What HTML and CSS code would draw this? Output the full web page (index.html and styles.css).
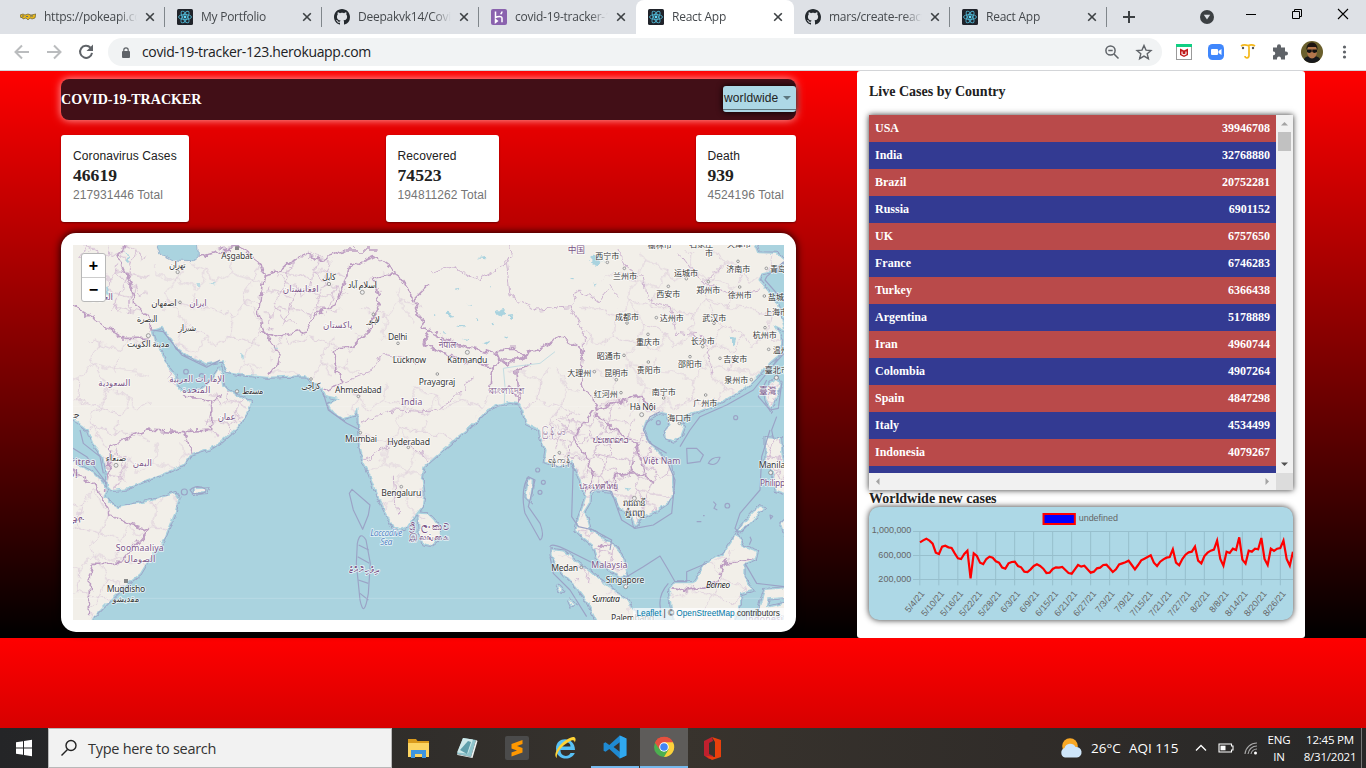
FILE: index.html
```html
<!DOCTYPE html>
<html lang="en">
<head>
<meta charset="utf-8">
<title>React App</title>
<link rel="stylesheet" href="styles.css">
</head>
<body>
<svg class="defs" width="0" height="0">
  <defs>
    <symbol id="react" viewBox="0 0 16 16"><rect width="16" height="16" rx="1.5" fill="#20232a"/><g fill="none" stroke="#4fb3cf" stroke-width=".9"><ellipse cx="8" cy="8" rx="6.5" ry="2.5"/><ellipse cx="8" cy="8" rx="6.5" ry="2.5" transform="rotate(60 8 8)"/><ellipse cx="8" cy="8" rx="6.5" ry="2.5" transform="rotate(120 8 8)"/></g><circle cx="8" cy="8" r="1.4" fill="#61dafb"/></symbol>
    <symbol id="github" viewBox="0 0 16 16"><path fill="#24292e" d="M8 0C3.58 0 0 3.58 0 8c0 3.54 2.29 6.53 5.47 7.59.4.07.55-.17.55-.38 0-.19-.01-.82-.01-1.49-2.01.37-2.53-.49-2.69-.94-.09-.23-.48-.94-.82-1.13-.28-.15-.68-.52-.01-.53.63-.01 1.08.58 1.23.82.72 1.21 1.87.87 2.33.66.07-.52.28-.87.51-1.07-1.78-.2-3.64-.89-3.64-3.95 0-.87.31-1.59.82-2.15-.08-.2-.36-1.02.08-2.12 0 0 .67-.21 2.2.82.64-.18 1.32-.27 2-.27s1.36.09 2 .27c1.53-1.04 2.2-.82 2.2-.82.44 1.1.16 1.92.08 2.12.51.56.82 1.27.82 2.15 0 3.07-1.87 3.75-3.65 3.95.29.25.54.73.54 1.48 0 1.07-.01 1.93-.01 2.2 0 .21.15.46.55.38A8.01 8.01 0 0 0 16 8c0-4.42-3.58-8-8-8z"/></symbol>
    <symbol id="x" viewBox="0 0 10 10"><path d="M1.2 1.2l7.6 7.6M8.800 1.200L1.200 8.800" stroke="#3c4043" stroke-width="1.6"/></symbol>
  </defs>
</svg>

<header class="tabs">
  <div class="tab"><svg class="fav" viewBox="0 0 16 16"><path d="M0 6l3-1 2 1 3-1 3 1 5-1-1 4-3 1-2-1-2 2-2-2-3 1-1-2-1 1z" fill="#e5b51d" stroke="#5b5326" stroke-width=".6"/><path d="M2 7h2M6 7.500h2M10 7h3" stroke="#3d5a8a" stroke-width=".8"/></svg><span class="tt">https://pokeapi.co/</span><svg class="cl"><use href="#x"/></svg></div>
  <div class="tab"><svg class="fav"><use href="#react"/></svg><span class="tt">My Portfolio</span><svg class="cl"><use href="#x"/></svg></div>
  <div class="tab"><svg class="fav"><use href="#github"/></svg><span class="tt">Deepakvk14/Covid</span><svg class="cl"><use href="#x"/></svg></div>
  <div class="tab nosep"><svg class="fav" viewBox="0 0 16 16"><rect width="16" height="16" rx="2" fill="#8a62ae"/><path d="M4.500 2.500v6c2-1 6.500-1.800 6.500.7v4M11 2.500c0 1.200-.6 2-1.400 2.700M4.500 10.500v3l1.800-1.500z" fill="none" stroke="#fff" stroke-width="1.500"/></svg><span class="tt">covid-19-tracker-1</span><svg class="cl"><use href="#x"/></svg></div>
  <div class="tab active"><svg class="fav"><use href="#react"/></svg><span class="tt">React App</span><svg class="cl"><use href="#x"/></svg></div>
  <div class="tab"><svg class="fav"><use href="#github"/></svg><span class="tt">mars/create-react-a</span><svg class="cl"><use href="#x"/></svg></div>
  <div class="tab"><svg class="fav"><use href="#react"/></svg><span class="tt">React App</span><svg class="cl"><use href="#x"/></svg></div>
  <svg class="plus" viewBox="0 0 12 12"><path d="M6 0v12M0 6h12" stroke="#3c4043" stroke-width="2"/></svg>
  <div class="win">
    <svg class="w42" viewBox="0 0 42 34"><circle cx="21" cy="17" r="7" fill="#3c4043"/><path d="M17.800 14.800h6.400L21 19.500z" fill="#dee1e6"/></svg>
    <svg class="w46" viewBox="0 0 46 34"><path d="M18 14.500h10" stroke="#000"/></svg>
    <svg class="w46" viewBox="0 0 46 34"><path d="M18.500 11.500h7v7h-7zM20.500 11v-1.500h7v7H26" fill="none" stroke="#000"/></svg>
    <svg class="w46" viewBox="0 0 46 34"><path d="M18 9l10 10M28 9L18 19" stroke="#000" stroke-width="1.100"/></svg>
  </div>
</header>
<nav class="toolbar">
  <svg class="tb" viewBox="0 0 32 36"><path d="M23 18H10M16 11.500L9.500 18l6.500 6.500" fill="none" stroke="#babcbe" stroke-width="2"/></svg>
  <svg class="tb" viewBox="0 0 32 36"><path d="M9 18h13M16 11.500l6.500 6.500-6.500 6.500" fill="none" stroke="#babcbe" stroke-width="2"/></svg>
  <svg class="tb" viewBox="0 0 32 36"><path d="M20.500 13.800A6 6 0 1 0 22 18.800" fill="none" stroke="#5f6368" stroke-width="2"/><path d="M23 10.500v6.500h-6.500z" fill="#5f6368"/></svg>
  <div class="pill">
    <svg class="lock" viewBox="0 0 8 11"><rect y="4" width="8" height="7" rx="1" fill="#5f6368"/><path d="M1.800 4.500V3a2.200 2.200 0 0 1 4.400 0v1.500" fill="none" stroke="#5f6368" stroke-width="1.200"/></svg>
    <span class="url">covid-19-tracker-123.herokuapp.com</span>
    <svg class="tb pz" viewBox="0 0 32 28"><circle cx="14.500" cy="12.500" r="4.600" fill="none" stroke="#5f6368" stroke-width="1.500"/><path d="M18 16l4.500 4.500M12.300 12.500h4.400" stroke="#5f6368" stroke-width="1.500"/></svg>
    <svg class="tb" viewBox="0 0 32 28"><path d="M16 7.500l2 4.600 5 .4-3.800 3.300 1.200 4.900-4.400-2.600-4.400 2.600 1.200-4.900L9 12.500l5-.4z" fill="none" stroke="#5f6368" stroke-width="1.400"/></svg>
  </div>
  <svg class="tb" viewBox="0 0 32 36"><rect x="8.500" y="10.500" width="15" height="15" fill="#fff" stroke="#9a9a9a"/><path d="M8 10h16v3H8z" fill="#10cf83"/><path d="M12 14.500l4 2 4-2v6.500l-4 2-4-2z" fill="#c01818"/><path d="M14 17.500v2.500l2 1 2-1v-2.500" fill="none" stroke="#fff" stroke-width="1.100"/></svg>
  <svg class="tb" viewBox="0 0 32 36"><rect x="8" y="10" width="16" height="16" rx="4.500" fill="#4087fc"/><rect x="11" y="15" width="7" height="6" rx="1" fill="#fff"/><path d="M18.500 17l3-2v6l-3-2z" fill="#fff"/></svg>
  <svg class="tb" viewBox="0 0 32 36"><path d="M9 12c2-1.500 4.500-1.500 7-.5 2.500-1 5-1 7 .5M17 12v9.500c0 3-4 3-4 .5" fill="none" stroke="#f4b81c" stroke-width="1.700"/><circle cx="11" cy="14" r="1.200" fill="#555"/><circle cx="21" cy="14" r="1.200" fill="#555"/></svg>
  <svg class="tb" viewBox="0 0 32 36"><path d="M9 13.500h4v-1.200a2 2 0 0 1 4 0v1.200h4v4h1a2 2 0 0 1 0 4h-1v4h-4v-1a2 2 0 0 0-4 0v1H9v-4.300h1a2 2 0 0 0 0-3.700H9z" fill="#5f6368"/></svg>
  <svg class="tb" viewBox="0 0 32 36"><circle cx="16" cy="18" r="11" fill="#6a5f2c"/><path d="M8 25.500c1-5 15-5 16 0a11 11 0 0 1-16 0" fill="#18191b"/><ellipse cx="16" cy="17.500" rx="5" ry="7" fill="#b3764c"/><path d="M10.500 16c-1-10 12-10 11 0l-1.500-3h-8z" fill="#1c1410"/><path d="M11 15.500h4.700v2.300c-1 1.500-4 1.500-4.700 0zM16.300 15.500H21v2.300c-1 1.500-4 1.500-4.700 0z" fill="#111"/></svg>
  <svg class="tb" viewBox="0 0 32 36"><g fill="#5f6368"><circle cx="16.500" cy="13" r="1.600"/><circle cx="16.500" cy="18" r="1.600"/><circle cx="16.500" cy="23" r="1.600"/></g></svg>
</nav>

<main class="app">
  <section class="left">
    <div class="head"><h1>COVID-19-TRACKER</h1><div class="select">worldwide<i></i></div></div>
    <div class="stats">
      <div class="stat"><p>Coronavirus Cases</p><h2>46619</h2><small>217931446 Total</small></div>
      <div class="stat"><p>Recovered</p><h2>74523</h2><small>194811262 Total</small></div>
      <div class="stat"><p>Death</p><h2>939</h2><small>4524196 Total</small></div>
    </div>
    <div class="mapcard"><div class="map">
      <svg class="mapsvg" viewBox="39 45 2133 1125">
        <defs>
          <filter id="rough" filterUnits="userSpaceOnUse" x="0" y="0" width="2220" height="1220"><feTurbulence type="fractalNoise" baseFrequency=".035" numOctaves="3" seed="4"/><feDisplacementMap in="SourceGraphic" scale="30" xChannelSelector="R" yChannelSelector="G"/></filter>
          <filter id="coast" filterUnits="userSpaceOnUse" x="0" y="0" width="2220" height="1220"><feTurbulence type="fractalNoise" baseFrequency=".05" numOctaves="2" seed="9"/><feDisplacementMap in="SourceGraphic" scale="14" xChannelSelector="R" yChannelSelector="G"/></filter>
          <pattern id="cells" width="120" height="110" patternUnits="userSpaceOnUse"><path d="M0 25L30 35 50 10 85 20 120 25M50 10L45 0M30 35L25 70 60 80 75 50 50 10M75 50L110 60 120 90M0 90L25 70M60 80L45 110M60 80L95 95 110 60M95 95L90 110M85 20L90 0M85 20L75 50" fill="none" stroke="#d0b8d1" stroke-width="2.800"/></pattern>
          <pattern id="big" width="230" height="190" patternUnits="userSpaceOnUse"><path d="M0 45L60 70 100 20 165 40 230 45M100 20L90 0M60 70L50 130 120 150 145 95 100 20M145 95L210 120 230 160M0 160L50 130M120 150L90 190M120 150L185 175 210 120M165 40L175 0" fill="none" stroke="#dac8d9" stroke-width="2.500"/></pattern>
          <path id="land" d="M20 20H2075L2095 70 2150 72 2172 90 2150 120 2105 130 2095 150 2120 180 2130 200 2150 220 2160 250 2172 300 2140 285 2155 310 2166 330 2160 370 2130 395 2100 430 2070 460 2040 480 2000 505 1960 525 1910 545 1865 560 1858 585 1832 585 1820 550 1800 545 1775 560 1755 575 1748 600 1760 630 1775 650 1800 675 1830 705 1835 740 1838 790 1825 815 1790 840 1750 860 1725 885 1715 850 1680 835 1670 810 1655 785 1610 780 1590 790 1588 815 1570 845 1580 865 1590 900 1620 920 1640 935 1665 950 1685 975 1695 1010 1700 1035 1680 1040 1650 1020 1610 980 1600 945 1570 920 1550 900 1555 870 1570 830 1580 800 1565 760 1550 720 1535 690 1520 705 1495 705 1455 695 1460 660 1445 630 1440 600 1400 580 1390 540 1380 520 1350 515 1310 525 1280 540 1260 560 1230 590 1190 620 1170 640 1110 692 1090 710 1085 750 1090 790 1085 830 1060 860 1040 890 1020 898 1000 888 980 850 950 790 930 730 910 690 900 640 897 580 895 530 880 555 850 565 825 548 805 525 840 505 795 495 785 470 750 450 735 435 620 440 540 432 500 425 491 390 440 400 390 380 350 350 310 290 275 300 285 340 310 380 320 410 345 440 350 470 370 490 420 480 460 450 480 420 490 470 530 500 570 515 560 545 540 580 520 600 480 635 450 655 390 675 370 705 300 735 260 750 200 775 155 780 145 770 140 730 130 680 100 640 85 600 60 580 20 550zM20 680L60 710 100 730 130 760 140 780 130 800 150 820 175 835 220 825 290 810 345 790 355 805 345 845 330 880 310 930 270 980 240 1030 190 1070 140 1120 100 1160 85 1190H20zM1075 848L1100 850 1120 870 1140 895 1138 925 1115 945 1090 940 1080 910zM1475 960L1510 965 1550 995 1590 1025 1620 1050 1670 1090 1700 1110 1722 1145 1715 1190H1620L1580 1110 1550 1070 1520 1040 1495 1010 1475 975zM1830 1080L1845 1060 1900 1060 1940 1000 1990 975 2030 915 2050 950 2090 965 2085 985 2050 1000 2050 1040 2075 1080 2040 1090 2040 1120 2010 1190H1850L1835 1130zM1815 605L1832 584 1858 580 1872 592 1862 618 1840 634 1818 625zM2150 445L2115 480 2120 510 2132 535 2150 495 2158 460zM2120 625L2160 628 2165 680 2180 720V790L2150 780 2140 730 2120 690zM2100 830L2110 834 2045 900 2035 900zM2100 1190L2100 1130 2115 1080 2180 1075V1100L2125 1105 2120 1135 2180 1120V1150L2140 1160zM405 778L440 776 436 786 405 788zM1405 750L1415 752 1410 810 1400 800zM1490 1065L1505 1080 1497 1082zM1525 1105L1543 1125 1535 1128zM2165 880L2180 865V925z"/>
          <clipPath id="lc"><use href="#land"/></clipPath>
        </defs>
        <rect x="39" y="45" width="2133" height="1125" fill="#aad3df"/>
        <g filter="url(#coast)">
          <use href="#land" fill="none" stroke="#9ba3c6" stroke-width="13"/>
          <use href="#land" fill="#f2efe9" stroke="#aad3df" stroke-width="8"/>
          <use href="#land" fill="#f2efe9"/>
          <path d="M285 30L300 70 340 90 400 92 415 80 412 30z" fill="#aad3df" stroke="#9bb5cf" stroke-width="3"/>
        </g>
        <g clip-path="url(#lc)"><g filter="url(#rough)">
          <path d="M1450 590L1560 530 1660 510 1740 580 1860 720 1840 820 1720 900 1560 790z" fill="url(#cells)"/>
          <path d="M1560 850H1720V1060H1540z" fill="url(#cells)"/>
          <path d="M610 190L720 60 870 110 850 240 620 300z" fill="url(#cells)"/>
          <path d="M30 30H260L265 270 130 230zM80 650H200V780H120zM440 480H570V620H440zM330 400H360V480H330zM2110 400H2180V820H2110z" fill="url(#cells)"/>
          <path d="M40 330H270V650H40zM280 100H600V430H340zM150 640H420V740H150z" fill="url(#big)"/>
          <path d="M30 780H370V1180H30zM620 320H900V440H640zM850 440L1290 500 1200 620 1100 700V900H900zM930 80L1110 250 1000 320 880 330z" fill="url(#big)"/>
          <path d="M1560 200L1750 60H2180V560H1650L1580 380zM1340 410L1540 420 1600 760 1450 700zM1830 960H2120V1180H1830zM1470 950H1740V1180z" fill="url(#big)"/>
          <g fill="none" stroke="#bd9dc2" stroke-width="5" stroke-linejoin="round">
            <path d="M200 30L175 80 215 170 225 220 265 260 275 300M30 225L100 265 190 325 270 325M415 80L480 60 540 50 600 100 610 135 595 250 610 300 660 370 655 400 620 440"/>
            <path d="M610 135L660 125 720 75 790 90 860 60 950 60M600 305L650 320 740 300 770 250 820 230 850 170 870 110 940 80 1010 130 1060 210 1110 160M1010 130L940 140 960 220 920 310 880 350 820 360 830 430 850 460 790 480"/>
            <path d="M1060 215L1090 290 1180 340 1300 370 1340 405 1430 360 1500 320 1550 350 1570 370 1560 470 1600 500 1610 540 1660 520 1740 500 1790 545M1110 290L1090 340 1200 390 1310 410 1320 390M1300 410L1290 490 1350 470 1380 520 1370 420 1420 400"/>
            <path d="M1310 370L1320 355 1370 355 1395 380 1380 390 1320 390zM1600 540L1540 620 1600 730 1580 790 1560 850M1610 550L1660 600 1730 640 1760 750 1780 760M1670 780L1665 740 1760 730M1720 690L1710 740M1610 945L1640 950 1660 935M1840 1070L1880 1080 1970 1060 1990 1000 2080 990M2000 980L1985 1000"/>
            <path d="M370 490L380 505 455 510 455 600 370 605 260 600 150 650 140 780M370 605L395 675M460 510L490 500M130 800L150 860 265 900 180 1000 100 1000 88 1040V1150M39 720L100 760 130 800"/>
          </g>
          <g fill="none" stroke="#ccb2cf" stroke-width="3">
            <path d="M1110 130L1180 110 1250 150 1340 100 1350 200 1440 240 1530 230 1550 180 1620 210 1650 170 1680 200M1340 100L1360 30M1530 230L1570 300 1570 370M1680 60L1700 120 1750 140 1760 210 1830 230 1850 310 1930 320 1960 430M1860 70L1930 160 1980 110M1930 160L2010 190 2100 180"/>
            <path d="M850 460L940 420 970 370 1080 400M900 580L1000 540 1110 545 1180 510 1240 440M910 690L1000 640 1060 650 1110 690M1000 740L1010 860"/>
          </g>
        </g>
        <g fill="#aad3df" filter="url(#rough)"><path d="M190 55l15 25 8 22-9-8zM140 165l8 15 8 35-8-5zM1595 78l22-3 12 14-15 14-21-6zM1250 85l24-5-5 8zM1305 240l20-6 9 14-17 11zM1160 250l12-2 4 10-12 3zM1200 285l9 0-2 7-10 0zM1240 265l15 2-2 6zM1345 255l18-3-5 12zM1525 145l18 0-4 7zM1330 320l18 0-5 7zM1270 335l20-9-4 13zM1600 160l10 8-5 4zM540 370h8v12h-6zM400 160h18l-2 4h-14zM440 160h20v3h-18zM640 350h20v3h-18zM2010 320l16 3-4 22-12-8zM1695 765l15 12-4 6zM1120 250h15l-4 8zM1190 180l14-4-3 8zM1150 310h12l-4 6zM1210 325l16 2-6 5zM1290 165l10 5-6 4zM1225 225l12-4 2 7zM1295 280l14 2-6 7z"/></g></g>
        <g fill="none" stroke="#9ba3c6" stroke-width="3.500" stroke-linejoin="round">
          <path d="M275 300L310 305 365 375 440 412 480 390M790 490L805 540 860 580 900 600M876 778L930 825 925 855 908 898 880 840 868 790zM892 940Q900 900 918 930L931 1000 925 1090Q912 1170 900 1110L889 1000zM1405 740Q1380 780 1395 850L1440 930Q1455 920 1440 880L1405 830 1425 750zM1470 950Q1475 935 1540 970L1600 1000M1470 980L1480 1030 1530 1080 1580 1160M1590 790Q1595 770 1655 785L1670 830 1685 870 1725 895 1780 885 1835 850 1845 750 1820 690M1540 700L1535 860 1555 890 1600 900 1655 930 1650 960M1700 1040L1750 1010 1800 978 1825 1020 1845 1055 1880 1055 1880 1025 1940 1000M2035 905L2025 895 2040 850 2100 780 2105 680 2130 600M2055 1000L2090 1060 2172 1070M1800 545L1770 560 1750 600 1770 640 1820 670M1860 650L1890 600 1920 560 2000 525 2080 480 2140 405 2172 370M2120 450L2095 500 2130 540 2155 535 2165 460M2172 95L2120 140 2115 150 2172 215M2150 560L2135 600 2140 625M1880 655L1910 655 1930 675 1920 695 1882 700zM1945 700q10-20 35-18-10 30-35 18zM1825 1060Q1780 1110 1815 1170"/>
          <circle cx="2027" cy="563" r="6"/><circle cx="1795" cy="578" r="6"/><circle cx="1450" cy="757" r="6"/><circle cx="1433" cy="720" r="6"/><circle cx="1440" cy="787" r="6"/><circle cx="2002" cy="827" r="7"/><circle cx="373" cy="786" r="9"/><path d="M390 780q20-20 48-2 0 18-40 12zM1960 815l8 8-6 12 10 5M1910 875h14M1929 857h5M896 945l30 15M893 980l35 20M895 1050l30 10M900 1090l25 20"/>
          <circle cx="378" cy="425" r="7"/><circle cx="425" cy="438" r="7"/><path d="M60 600L70 640 120 680 130 730M39 655L80 680 110 720 140 760M2070 920l4 10-6 14M2130 855l8 4-6 8z"/>
        </g>
        <path d="M1333 520L1335 470 1330 415 1375 408 1440 400 1485 365" fill="none" stroke="#c3dde2" stroke-width="3"/>
        <path d="M39 529H2172M39 1105H2172" stroke="#fff" opacity=".25" stroke-width="2"/>
        <g fill="#eee" stroke="#777" stroke-width="2"><circle cx="353" cy="126" r="5"/><circle cx="360" cy="217" r="4"/><circle cx="265" cy="317" r="6"/><circle cx="531" cy="484" r="5"/><circle cx="807" cy="162" r="5"/><circle cx="907" cy="187" r="6"/><circle cx="940" cy="253" r="4"/><circle cx="1014" cy="340" r="4"/><circle cx="895" cy="499" r="4"/><circle cx="901" cy="608" r="4"/><circle cx="1045" cy="652" r="4"/><circle cx="1024" cy="770" r="4"/><circle cx="168" cy="706" r="6"/><circle cx="1222" cy="367" r="6"/><circle cx="1132" cy="432" r="4"/><circle cx="753" cy="447" r="4"/><circle cx="1745" cy="554" r="6"/><circle cx="1723" cy="805" r="6"/><circle cx="1697" cy="1070" r="6"/><circle cx="1564" cy="1012" r="4"/><circle cx="2132" cy="728" r="6"/><circle cx="2149" cy="443" r="6"/><circle cx="1498" cy="668" r="4"/><circle cx="1642" cy="97" r="4"/><circle cx="1693" cy="115" r="4"/><circle cx="1879" cy="146" r="4"/><circle cx="1825" cy="169" r="4"/><circle cx="1945" cy="155" r="4"/><circle cx="2034" cy="94" r="4"/><circle cx="2039" cy="171" r="4"/><circle cx="2119" cy="115" r="4"/><circle cx="2113" cy="198" r="4"/><circle cx="1789" cy="263" r="4"/><circle cx="1701" cy="279" r="4"/><circle cx="1962" cy="280" r="4"/><circle cx="1764" cy="313" r="4"/><circle cx="1928" cy="350" r="4"/><circle cx="2115" cy="293" r="4"/><circle cx="1692" cy="376" r="4"/><circle cx="1765" cy="396" r="4"/><circle cx="1890" cy="380" r="4"/><circle cx="1980" cy="385" r="4"/><circle cx="1603" cy="425" r="4"/><circle cx="1669" cy="449" r="4"/><circle cx="1683" cy="488" r="4"/><circle cx="1811" cy="504" r="4"/><circle cx="1937" cy="495" r="4"/><circle cx="2074" cy="449" r="4"/><circle cx="1858" cy="580" r="4"/><circle cx="2126" cy="358" r="4"/></g>
        <path d="M525 49h12v11h-12zM192 1047h12v12h-12z" fill="#888"/>
        <g class="city">
          <text x="531" y="86" textLength="94">Aşgabat</text><text x="352" y="113" textLength="50">تهران</text><text x="312" y="228" textLength="76">اصفهان</text><text x="261" y="276" textLength="62">البصرة</text><text x="382" y="302" textLength="54">شیراز</text><text x="265" y="350" textLength="128">مدينة الكويت</text><text x="578" y="492" textLength="64">مسقط</text><text x="807" y="149" textLength="42">کابل</text><text x="907" y="173" textLength="88">اسلام آباد</text><text x="940" y="278" textLength="40">لاہور</text><text x="1013" y="330" textLength="58">Delhi</text><text x="1048" y="400" textLength="100">Lucknow</text><text x="1131" y="464" textLength="110">Prayagraj</text><text x="895" y="490" textLength="140">Ahmedabad</text><text x="753" y="476" textLength="58">کراچی</text><text x="903" y="635" textLength="96">Mumbai</text><text x="1046" y="644" textLength="128">Hyderabad</text><text x="1024" y="797" textLength="120">Bengaluru</text><text x="168" y="693" textLength="62">صنعاء</text><text x="48" y="565" textLength="22">جد</text><text x="198" y="1085" textLength="116">Muqdisho</text><text x="198" y="1116" textLength="80">مقديشو</text><text x="1222" y="398" textLength="120">Katmandu</text><text x="1748" y="541" textLength="78">Hà Nội</text><text x="1498" y="700" textLength="70">ရန်ကုန်</text><text x="1722" y="828" textLength="68">រាជធានី</text><text x="1722" y="858" textLength="60">ភ្នំពេញ</text><text x="1514" y="1022" textLength="80">Medan</text><text x="1695" y="1058" textLength="116">Singapore</text><text x="1718" y="1172" textLength="130">Palembang</text><text x="2136" y="713" textLength="80">Manila</text>
          <text x="1799" y="53">榆林市</text><text x="1924" y="50">石家庄</text><text x="1947" y="78">市</text><text x="2037" y="50">天津市</text><text x="1642" y="86">西宁市</text><text x="1695" y="146">兰州市</text><text x="1878" y="137">运城市</text><text x="2035" y="127">济南市</text><text x="2166" y="125">青岛市</text><text x="1825" y="200">西安市</text><text x="1945" y="188">郑州市</text><text x="2039" y="204">徐州市</text><text x="2160" y="210">盐城市</text><text x="1701" y="271">成都市</text><text x="1835" y="274">达州市</text><text x="1963" y="272">武汉市</text><text x="2148" y="254">上海市</text><text x="1764" y="344">重庆市</text><text x="1928" y="342">长沙市</text><text x="2114" y="324">杭州市</text><text x="2174" y="370">温州市</text><text x="1646" y="388">昭通市</text><text x="1766" y="428">贵阳市</text><text x="1890" y="411">邵阳市</text><text x="2026" y="395">吉安市</text><text x="1558" y="437">大理州</text><text x="1669" y="437">昆明市</text><text x="2029" y="458">泉州市</text><text x="2150" y="428">臺北市</text><text x="1637" y="500">红河州</text><text x="1811" y="495">南宁市</text><text x="1936" y="528">广州市</text><text x="1858" y="572">海口市</text>
        </g>
        <g class="land-name">
          <text x="126" y="209" textLength="66">العراق</text><text x="414" y="228" textLength="52">ایران</text><text x="722" y="187" textLength="108">افغانستان</text><text x="833" y="295" textLength="88">پاکستان</text><text x="163" y="468" textLength="96">السعودية</text><text x="411" y="457" textLength="166">الإمارات العربية</text><text x="409" y="488" textLength="84">المتحدة</text><text x="500" y="570" textLength="54">عمان</text><text x="1055" y="524" textLength="64">India</text><text x="247" y="708" textLength="58">اليمن</text><text x="62" y="704" textLength="88">Eritrea</text><text x="42" y="738" textLength="22">إر</text><text x="48" y="878" textLength="50">ኢትዮ</text><text x="239" y="964" textLength="144">Soomaaliya</text><text x="239" y="996" textLength="94">الصومال</text><text x="1162" y="353" textLength="52">नेपाल</text><text x="1339" y="491" textLength="104">বাংলাদেশ</text><text x="1549" y="68">中国</text><text x="1480" y="614" textLength="68">မြန်မာ</text><text x="1652" y="638" textLength="108">ປະເທດລາວ</text><text x="1805" y="702" textLength="112">Việt Nam</text><text x="1616" y="776" textLength="118">ประเทศไทย</text><text x="1108" y="900" textLength="120">ශ්‍රී ලංකාව</text><text x="1108" y="930" textLength="120">இலங்கை</text><text x="911" y="1030" textLength="90">ދިވެހިރާއްޖެ</text><text x="1648" y="1013" textLength="108">Malaysia</text><text x="2123" y="491">臺灣</text><text x="2160" y="768" textLength="120">Philippines</text><text x="2120" y="1175" textLength="130">Indonesia</text>
        </g>
        <g class="isle"><text x="1638" y="1117" textLength="84">Sumatra</text><text x="1974" y="1075" textLength="72">Borneo</text></g>
        <g class="sea"><text x="979" y="918" textLength="96">Laccadive</text><text x="979" y="944" textLength="36">Sea</text></g>
      </svg>
      <div class="zoom"><span>+</span><span>−</span></div>
      <div class="attr"><b>Leaflet</b> | © <b>OpenStreetMap</b> contributors</div>
    </div></div>
  </section>

  <aside class="right">
    <h3>Live Cases by Country</h3>
    <div class="scroller">
      <div class="rows">
        <div class="row"><span>USA</span><span>39946708</span></div><div class="row"><span>India</span><span>32768880</span></div><div class="row"><span>Brazil</span><span>20752281</span></div><div class="row"><span>Russia</span><span>6901152</span></div><div class="row"><span>UK</span><span>6757650</span></div><div class="row"><span>France</span><span>6746283</span></div><div class="row"><span>Turkey</span><span>6366438</span></div><div class="row"><span>Argentina</span><span>5178889</span></div><div class="row"><span>Iran</span><span>4960744</span></div><div class="row"><span>Colombia</span><span>4907264</span></div><div class="row"><span>Spain</span><span>4847298</span></div><div class="row"><span>Italy</span><span>4534499</span></div><div class="row"><span>Indonesia</span><span>4079267</span></div><div class="row"></div>
      </div>
      <div class="vbar"><svg viewBox="0 0 17 17"><path d="M5 10.500h7L8.500 7z" fill="#a3a3a3"/></svg><div class="thumb"></div><svg class="dn" viewBox="0 0 17 17"><path d="M5 6.500h7L8.500 10z" fill="#505050"/></svg></div>
      <div class="hbar"><svg viewBox="0 0 17 17"><path d="M10.500 5v7L7 8.500z" fill="#a3a3a3"/></svg><svg viewBox="0 0 17 17"><path d="M6.500 5v7L10 8.500z" fill="#a3a3a3"/></svg></div>
      <div class="corner"></div>
    </div>
    <h3 class="h3b">Worldwide new cases</h3>
    <svg class="chart" viewBox="27 81 1272 339">
      <path d="M159 154.500H1299M159 226.500H1299M159 298.500H1299M179.500 154V316M236.500 154V316M293.500 154V316M350.500 154V316M407 154V316M464 154V316M521 154V316M578 154V316M635 154V316M692 154V316M749 154V316M806 154V316M862 154V316M919 154V316M976 154V316M1033 154V316M1090 154V316M1147 154V316M1204 154V316M1261 154V316" stroke="#97bfcd" stroke-width="3" fill="none"/>
      <rect x="550.500" y="102" width="94" height="30" fill="#00f" stroke="red" stroke-width="6"/>
      <g class="ct"><text x="656" y="123" textLength="118">undefined</text><g text-anchor="end"><text x="154" y="160" textLength="119">1,000,000</text><text x="154" y="233" textLength="99">600,000</text><text x="154" y="305" textLength="99">200,000</text>
      <text transform="translate(195 342) rotate(-50)">5/4/21</text><text transform="translate(254 342) rotate(-50)">5/10/21</text><text transform="translate(311 342) rotate(-50)">5/16/21</text><text transform="translate(368 342) rotate(-50)">5/22/21</text><text transform="translate(425 342) rotate(-50)">5/28/21</text><text transform="translate(482 342) rotate(-50)">6/3/21</text><text transform="translate(539 342) rotate(-50)">6/9/21</text><text transform="translate(596 342) rotate(-50)">6/15/21</text><text transform="translate(653 342) rotate(-50)">6/21/21</text><text transform="translate(710 342) rotate(-50)">6/27/21</text><text transform="translate(766 342) rotate(-50)">7/3/21</text><text transform="translate(823 342) rotate(-50)">7/9/21</text><text transform="translate(880 342) rotate(-50)">7/15/21</text><text transform="translate(937 342) rotate(-50)">7/21/21</text><text transform="translate(994 342) rotate(-50)">7/27/21</text><text transform="translate(1051 342) rotate(-50)">8/2/21</text><text transform="translate(1108 342) rotate(-50)">8/8/21</text><text transform="translate(1165 342) rotate(-50)">8/14/21</text><text transform="translate(1222 342) rotate(-50)">8/20/21</text><text transform="translate(1279 342) rotate(-50)">8/26/21</text></g></g>
      <polyline class="line" transform="translate(180 0) scale(9.482 1)" points="0,187 1,181 2,176 3,182 4,191 5,218 6,222 7,200 8,197 9,202 10,204 11,220 12,235 13,237 14,222 15,212 16,295 17,220 18,228 19,248 20,252 21,237 22,230 23,233 24,244 25,248 26,263 27,266 28,250 29,246 30,245 31,258 32,262 33,275 34,276 35,268 36,258 37,253 38,258 39,266 40,279 41,278 42,267 43,262 44,263 45,261 46,270 47,279 48,281 49,268 50,255 51,260 52,257 53,268 54,278 55,275 56,265 57,263 58,255 59,254 60,265 61,276 62,268 63,253 64,250 65,247 66,242 67,255 68,268 69,255 70,241 71,236 72,231 73,226 74,248 75,258 76,245 77,238 78,233 79,231 80,208 81,248 82,256 83,237 84,224 85,217 86,215 87,200 88,242 89,250 90,228 91,218 92,212 93,209 94,182 95,237 96,257 97,215 98,219 99,206 100,210 101,172 102,239 103,251 104,212 105,215 106,206 107,208 108,174 109,237 110,255 111,206 112,213 113,206 114,204 115,182 116,237 117,257 118,215"/>
    </svg>
  </aside>
</main>

<footer class="taskbar">
  <svg class="start" viewBox="0 0 48 40"><path d="M16 14.200l7-1v6.300h-7zM24 13l8-1.200v7.700h-8zM16 20.500h7v6.300l-7-1zM24 20.500h8v7.700L24 27z" fill="#fff"/></svg>
  <div class="search"><svg viewBox="0 0 18 18"><circle cx="11" cy="6.500" r="5" fill="none" stroke="#222" stroke-width="1.400"/><path d="M7.500 10.500L1.500 16.500" stroke="#222" stroke-width="1.400"/></svg>Type here to search</div>
  <div class="apps">
    <svg viewBox="0 0 48 40"><path d="M13 11h8l1.500 2H34v4H13z" fill="#d99a1c"/><path d="M13 15h21v14H13z" fill="#fcd462"/><path d="M16 22h15v8h-4v-4h-7v4h-4z" fill="#3d95e0"/></svg>
    <svg viewBox="0 0 48 40"><path d="M19 10l13 2-5 17-14-3z" fill="#8fc4cc"/><path d="M19 10l10 1.500-5 14-11-1z" fill="#cfe9ea"/><path d="M13 26l14 3 5-17 1.500 1-5 17-15-3z" fill="#eef3f3"/><path d="M16 22l8-9 3 1-4 12z" fill="#5f9fab"/></svg>
    <svg viewBox="0 0 48 40"><rect x="12" y="8" width="24" height="24" rx="2" fill="#4b4b4b"/><path d="M18.500 16l11-4v4l-5.500 2 5.500 2v4.500l-11 4v-4l5.500-2-5.500-2z" fill="#ff9800"/></svg>
    <svg viewBox="0 0 48 40"><path d="M33 22H18.500c0 7 8 7.500 10 3h4.300C30 33 14 33 14 20.500S33 8 33 22zM18.800 18.500h9.700c0-6-9.200-6-9.700 0z" fill="#58c1f5"/><path d="M15 30c-5-3 3-15 10-18.500 4.500-3 8-3.500 8.500-.5.300 1-.2 2.500-1 3.500.3-2.500-2-3-6-.5-7 4-13 11.500-11.500 16z" fill="#ffd335"/></svg>
    <svg class="open" viewBox="0 0 48 40"><path d="M29 8l7 3v18l-7 3-11-10-4 3-2-1v-8l2-1 4 3zM29 15l-6.500 5 6.500 5z" fill="#1f8ad2"/><path d="M29 8l7 3v18l-7 3z" fill="#30a9f0"/></svg>
    <svg class="open on" viewBox="0 0 48 40"><circle cx="24" cy="20" r="10.500" fill="#4caf50"/><path d="M24 20L14.500 15.500A10.500 10.500 0 0 1 33.500 15z" fill="#ea4335"/><path d="M24 9.500a10.500 10.500 0 0 0-9.500 6l5 7L24 15h9.500a10.500 10.500 0 0 0-9.500-5.500z" fill="#e4513f"/><path d="M24 15h9.500a10.500 10.500 0 0 1-9.500 15.500l4.800-8z" fill="#fdd03b"/><circle cx="24" cy="20" r="5" fill="#fff"/><circle cx="24" cy="20" r="4" fill="#4285f4"/></svg>
    <svg viewBox="0 0 48 40"><path d="M15 13l8-4 1 4-4 2v11l4 2v3h-4l-5-3.500z" fill="#c0202e"/><path d="M23 9l9 3v17l-9 3-6-4 9 1V14z" fill="#e8400c"/></svg>
  </div>
  <div class="tray">
    <svg class="wx" viewBox="0 0 24 24"><circle cx="11" cy="10" r="7.800" fill="#f9a825"/><path d="M6 21.500a5 5 0 0 1-.5-9.500 6 6 0 0 1 11-1A5.300 5.300 0 0 1 18 21.500z" fill="#cfe6fa"/></svg>
    <span class="temp">26°C</span><span class="aqi">AQI 115</span>
    <svg class="ch" viewBox="0 0 12 8"><path d="M1 6.500l5-5 5 5" fill="none" stroke="#fff" stroke-width="1.300"/></svg>
    <svg class="bat" viewBox="0 0 16 10"><path d="M1 1h12.500v2h1.500v4h-1.500v2H1z" fill="none" stroke="#fff" stroke-width="1.100"/><path d="M2.500 2.700h5v4.600h-5z" fill="#fff"/></svg>
    <svg class="wifi" viewBox="0 0 14 14"><path d="M1 13A12 12 0 0 1 13 2M4 13a9 9 0 0 1 9-8M7 13a6 6 0 0 1 6-5" fill="none" stroke="#aaa" stroke-width="1.100"/><circle cx="11.500" cy="12" r="1.500" fill="#fff"/></svg>
    <div class="two lang"><span>ENG</span><span>IN</span></div><div class="two time"><span>12:45 PM</span><span>8/31/2021</span></div><i class="peek"></i>
  </div>
</footer>
</body>
</html>
```
FILE: styles.css
```css
*{box-sizing:border-box}
body{margin:0;width:1366px;height:768px;overflow:hidden;display:flex;flex-direction:column;font-family:"Liberation Sans",Arial,sans-serif}
h1,h2,h3,p{margin:0}
.defs{position:absolute}
svg{flex:none;display:block}
.tabs{height:34px;flex:none;background:#dee1e6;display:flex;align-items:center;padding-left:8px;font:12px/16px "Open Sans","Noto Sans",sans-serif;color:#45494d}
.tab{width:157px;height:34px;flex:none;display:flex;align-items:center;padding-left:12px;background:linear-gradient(#80868b,#80868b) right center/1px 20px no-repeat}
.tab.nosep{background:none}
.tab.active{background:#fff;border-radius:8px 8px 0 0;width:158px;margin-right:-1px}
.fav{width:16px;height:16px}
.tt{width:93px;margin-left:8px;overflow:hidden;white-space:nowrap;letter-spacing:-.25px;-webkit-mask:linear-gradient(90deg,#000 80%,transparent)}
.cl{width:10px;height:10px;margin-left:8px}
.plus{width:12px;height:12px;margin-left:16px}
.win{margin-left:auto;display:flex}
.w42{width:42px;height:34px}.w46{width:46px;height:34px}
.toolbar{height:37px;flex:none;background:#fff;border-bottom:1px solid #d3d5d8;display:flex;align-items:center;padding:0 6px}
.tb{width:32px;height:36px}
.pill{flex:1;height:28px;margin:0 6px;border-radius:14px;background:#f1f3f4;display:flex;align-items:center;padding-left:14px;padding-right:2px;font:14px/20px "Open Sans","Noto Sans",sans-serif;color:#202124}
.pill .tb{height:28px}
.lock{width:8px;height:11px}
.url{margin-left:12px;letter-spacing:-.35px}
.pz{margin-left:auto}
.app{flex:1;min-height:0;display:flex;justify-content:space-between;align-items:flex-start;padding:0 61px;background:linear-gradient(red,#000) 0 0/100% 567px repeat-y}
.left{width:735px;padding-top:8px}
.head{height:41px;border-radius:8px;background:#420f17;box-shadow:0 0 8px #ffb0b0;display:flex;align-items:center;justify-content:space-between}
.head h1{font:bold 14.050px "Liberation Serif",serif;color:#fff}
.select{width:73px;height:26px;margin-top:-1px;background:linear-gradient(#5d777f,#5d777f) 0 23px/100% 1px no-repeat #add8e6;border-radius:3px;box-shadow:0 0 6px #000;font-size:12px;line-height:24px;letter-spacing:.1px;color:#222;display:flex;justify-content:space-between;padding:0 5px 0 1px}
.select i{border:4px solid transparent;border-top-color:#5d777f;border-bottom:0;height:4px;margin-top:10px}
.stats{display:flex;justify-content:space-between;margin-top:15px}
.stat{height:87px;background:#fff;border-radius:3px;padding:12px 12px 0;box-shadow:0 1px 2px rgba(0,0,0,.4);font-size:12px;letter-spacing:.1px;white-space:nowrap;color:#212121}
.stat p{line-height:18px}
.stat h2{font:bold 17.600px/20px "Liberation Serif",serif;letter-spacing:0}
.stat small{display:block;font-size:12px;line-height:20px;color:#757575}
.mapcard{margin-top:11px;height:399px;padding:12px;border-radius:15px;background:#fff;box-shadow:0 0 9px #000}
.map{position:relative;height:375px;overflow:hidden}
.mapsvg{width:711px;height:375px}
.mapsvg text{font-family:"Noto Sans","DejaVu Sans","Noto Sans CJK SC",sans-serif;text-anchor:middle;paint-order:stroke;stroke:rgba(255,255,255,.7);stroke-width:5px;stroke-linejoin:round}
.mapsvg [textLength]{font-size:26px}
.city text{font-size:24px;fill:#373737}
.land-name text{font-size:26px;fill:#7b5587}
.isle text{font-size:24px;font-style:italic;fill:#222}
.sea text{font-size:22px;font-style:italic;fill:#5687c4}
.zoom{position:absolute;left:8px;top:8px;width:25px;height:49px;border:1px solid #b8b8b8;border-radius:3px;background:#fff;display:flex;flex-direction:column;font:bold 16px/23px "Liberation Sans",sans-serif;text-align:center}
.zoom span+span{border-top:1px solid #ccc}
.attr{position:absolute;right:0;bottom:0;height:12px;padding:0 4px 0 3px;background:rgba(255,255,255,.7);font-size:8.250px;line-height:12px;color:#333;white-space:nowrap}
.attr b{font-weight:400;color:#0078a8}
.right{width:448px;height:567px;background:#fff;border-radius:3px;padding:12px 12px 0}
.right h3{font:bold 14px/17px "Liberation Serif",serif;color:#212121}
.scroller{margin-top:15px;height:375px;display:grid;grid-template:358px 17px/407px 17px;box-shadow:0 0 6px #333;overflow:visible}
.rows{overflow:hidden}
.row{height:27px;background:#b94a4a;display:flex;justify-content:space-between;padding:0 6px;font:bold 12px/26px "Liberation Serif",serif;color:#fff}
.row:nth-child(even){background:#333a92}
.vbar,.hbar{background:#f1f1f1;display:flex;justify-content:space-between}
.vbar{flex-direction:column;justify-content:flex-start}
.vbar svg,.hbar svg{width:17px;height:17px}
.thumb{height:19px;margin:0 2px 0 2px;background:#c1c1c1}
.dn{margin-top:auto}
.corner{background:#dcdcdc}
.right .h3b{line-height:17px;height:17px}
.chart{width:424px;height:113px;background:#add8e6;border-radius:10px;box-shadow:0 0 6px #333}
.ct text{font:27px "Liberation Sans",sans-serif;fill:#666}
.line{fill:none;stroke:red;stroke-width:2.200px;vector-effect:non-scaling-stroke}
.taskbar{height:40px;flex:none;display:flex;background:linear-gradient(90deg,#242527,#38332d 50%,#302c29 75%,#282828);color:#fff;font-family:"Open Sans","Noto Sans",sans-serif}
.start{width:48px;height:40px}
.search{width:344px;background:#f2f2f2;border:1px solid #b8b8b8;display:flex;align-items:center;padding-left:11px;font-size:14.500px;letter-spacing:-.28px;color:#333}
.search svg{width:18px;height:18px;margin-right:10px}
.apps{display:flex;gap:1px;margin-left:3px}
.apps svg{width:48px;height:40px}
.open{border-bottom:2px solid #76b9ed}
.on{background:#5e5c5a}
.tray{margin-left:auto;display:flex;align-items:center;font-size:13.500px;white-space:nowrap}
.wx{width:24px;height:24px}
.temp{width:38px;margin-left:8px}.aqi{width:66px}
.ch{width:12px;height:8px}
.bat{width:16px;height:10px;margin-left:11px}
.wifi{width:14px;height:14px;margin-left:10px}
.two{display:flex;flex-direction:column;text-align:center;font-size:11.500px;line-height:17px;letter-spacing:-.2px}
.lang{width:36px;margin-left:3px}.time{width:60px;margin-left:3px}
.peek{width:1px;height:40px;background:#777;margin:0 4px 0 1px}
```
